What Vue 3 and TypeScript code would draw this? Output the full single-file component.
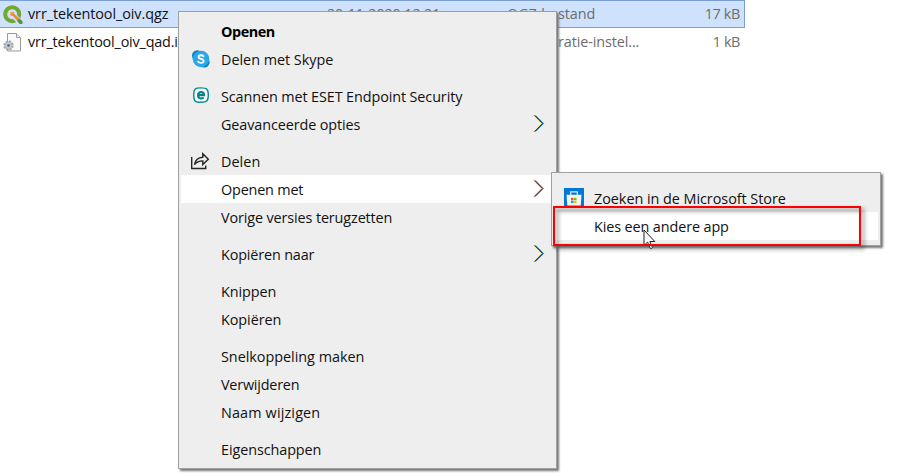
<script setup lang="ts">
interface MenuItem {
  label: string
  width: number
  icon?: 'skype' | 'eset' | 'share'
  bold?: boolean
  submenu?: boolean
  active?: boolean
}

const files = [
  { name: 'vrr_tekentool_oiv.qgz', nameW: 140, date: '20-11-2020 12:21', dateW: 113, type: 'QGZ-bestand', typeW: 88, size: '17 kB', sizeW: 35, selected: true },
  { name: 'vrr_tekentool_oiv_qad.ini', nameW: 161.5, date: '20-11-2020 12:21', dateW: 113, type: 'Configuratie-instel...', typeW: 132, size: '1 kB', sizeW: 27, selected: false },
]

const groups: MenuItem[][] = [
  [
    { label: 'Openen', width: 53.5, bold: true },
    { label: 'Delen met Skype', width: 112, icon: 'skype' },
  ],
  [
    { label: 'Scannen met ESET Endpoint Security', width: 241, icon: 'eset' },
    { label: 'Geavanceerde opties', width: 139, submenu: true },
  ],
  [
    { label: 'Delen', width: 39, icon: 'share' },
    { label: 'Openen met', width: 82, submenu: true, active: true },
    { label: 'Vorige versies terugzetten', width: 171 },
  ],
  [{ label: 'Kopiëren naar', width: 93, submenu: true }],
  [
    { label: 'Knippen', width: 55 },
    { label: 'Kopiëren', width: 60 },
  ],
  [
    { label: 'Snelkoppeling maken', width: 143 },
    { label: 'Verwijderen', width: 78 },
    { label: 'Naam wijzigen', width: 99 },
  ],
  [{ label: 'Eigenschappen', width: 100 }],
]

// Spreads the letters of a label over the given width.
const vFit = {
  mounted(el: HTMLElement, binding: { value: number }) {
    const natural = el.getBoundingClientRect().width
    const count = (el.textContent ?? '').length
    el.style.letterSpacing = `${(binding.value - natural + 0.3) / count}px`
  },
}
</script>

<template>
  <main class="desktop">
    <section class="files">
      <div v-for="(f, i) in files" :key="f.name" class="file" :class="{ selected: f.selected }">
        <svg v-if="i === 0" class="ficon" viewBox="0 0 24 24">
          <circle cx="12.2" cy="12.2" r="7" fill="none" stroke="#6fa832" stroke-width="4" />
          <path d="M12.500 12.500L22 22" stroke="#cfe2fd" stroke-width="5.500" />
          <path d="M16.800 18.800l2.400-2.600 3.300 3v2.800h-2.800z" fill="#589632" />
          <path d="M10.300 10.300h4.200l-.8 1.200 5.600 4.800-2.200 2.300-5-5.400-1.400 1z" fill="#ee8a2c" />
          <path d="M10.300 10.300h3l-2.600 2.800z" fill="#f7a93b" />
        </svg>
        <svg v-else class="ficon" viewBox="0 0 24 24">
          <path d="M7.500 3.500h9l4 4v13.500h-13z" fill="#fafafa" stroke="#9a9a9a" />
          <path d="M16.500 3.500v4h4" fill="#eee" stroke="#9a9a9a" />
          <circle cx="8.500" cy="15.500" r="4.200" fill="#b7bfc5" stroke="#9fa8ae" stroke-width="2" stroke-dasharray="2 1.300" />
          <circle cx="8.500" cy="15.500" r="3" fill="#c3cbd0" />
          <circle cx="8.500" cy="15.500" r="1.300" fill="#525e67" />
        </svg>
        <div class="name"><span v-fit="f.nameW">{{ f.name }}</span></div>
        <div class="date"><span v-fit="f.dateW">{{ f.date }}</span></div>
        <div class="type"><span v-fit="f.typeW">{{ f.type }}</span></div>
        <div class="size"><span v-fit="f.sizeW">{{ f.size }}</span></div>
      </div>
    </section>

    <nav class="menu main-menu">
      <div v-for="(g, gi) in groups" :key="gi" class="group">
        <div v-for="item in g" :key="item.label" class="item" :class="{ active: item.active, bold: item.bold }">
          <div class="icon">
            <svg v-if="item.icon === 'skype'" width="20" height="20" viewBox="0 0 20 20">
              <circle cx="7.500" cy="6.700" r="5.500" fill="#087cc1" />
              <circle cx="14.300" cy="13.200" r="5.300" fill="#087cc1" />
              <circle cx="11" cy="10" r="8.300" fill="#28a8ea" />
              <path d="M13.500 7.200C12.700 5.800 8.500 5.700 8.500 8c0 2.400 5.100 1.400 5.100 4 0 2.500-4.600 2.200-5.500.6" fill="none" stroke="#fff" stroke-width="1.900" stroke-linecap="round" />
            </svg>
            <svg v-else-if="item.icon === 'eset'" width="20" height="20" viewBox="0 0 20 20">
              <path d="M11 1.900c6 0 7.300 1.200 7.300 7.100S17 16.300 11 16.300 3.700 15 3.700 9 5 1.900 11 1.900z" fill="#f7ffff" stroke="#0a8d93" stroke-width="1.400" />
              <path d="M8 9.100h6c0-3.900-6-4.100-6 .1 0 3.600 3.500 3.800 5.700 2.500" fill="none" stroke="#0a8288" stroke-width="2.100" />
            </svg>
            <svg v-else-if="item.icon === 'share'" width="20" height="20" viewBox="0 0 20 20">
              <path d="M1.700 6v11.500h14v-3M4.500 13.700c.8-4.800 3.600-7.300 8.300-7.500V2.700l5.500 5.600-5.500 5.200v-3.600c-4 0-6.200 1-8.300 3.800z" fill="none" stroke="#252525" stroke-width="1.400" />
            </svg>
          </div>
          <span v-fit="item.width" class="label">{{ item.label }}</span>
          <svg v-if="item.submenu" class="chevron" :class="{ warm: item.active }" width="12" height="20" viewBox="0 0 12 20">
            <path class="fringe-left" d="M.8 2.400l8 8.100-8 8.100" />
            <path class="fringe-right" d="M2.600 2.400l8 8.100-8 8.100" />
            <path class="stroke" d="M1.700 2.400l8 8.100-8 8.100" />
          </svg>
        </div>
      </div>
    </nav>

    <nav class="menu sub-menu">
      <div class="item">
        <div class="icon">
          <svg width="20" height="20" viewBox="0 0 20 20">
            <path d="M0 0h20v20H0z" fill="#0078d7" />
            <path d="M6.700 7V3.800h6.600V7" fill="none" stroke="#d9edfc" stroke-width="1.200" />
            <path d="M2.500 6.800h15l-.8 10.700H3.300z" fill="#f5f7f8" />
            <path d="M7 9.800h2.500v2.400H7z" fill="#f04e23" />
            <path d="M10 9.800h2.500v2.400H10z" fill="#7fb900" />
            <path d="M7 12.700h2.500v2.400H7z" fill="#00a3ee" />
            <path d="M10 12.700h2.500v2.400H10z" fill="#ffb800" />
          </svg>
        </div>
        <span v-fit="191.500" class="label">Zoeken in de Microsoft Store</span>
      </div>
      <div class="item active">
        <div class="icon"></div>
        <span v-fit="134.500" class="label">Kies een andere app</span>
      </div>
    </nav>

    <div class="marker"></div>
    <svg class="cursor" width="14" height="21" viewBox="0 0 14 21">
      <path d="M1 1v15.500l3.600-3.400 2.500 6c.6 1.100 2.600.3 2.200-.9l-2.500-5.700h5z" fill="#fff" stroke="#1d1d2b" stroke-width="1" />
    </svg>
    <div class="marker-edge"></div>
  </main>
</template>

<style>
body {
  background: #fff;
}
</style>

<style scoped>
.desktop {
  position: relative;
  width: 898px;
  height: 476px;
  overflow: hidden;
  font: 14.4px/20px 'Open Sans', 'Noto Sans', sans-serif;
  color: #111;
  white-space: nowrap;
}
.files {
  width: 745px;
}
.file {
  display: grid;
  grid-template-columns: 26px 300px 180px 150px 83px;
  align-items: center;
  box-sizing: border-box;
  height: 28px;
  padding-left: 1px;
  border: 1px solid transparent;
  border-left: 0;
}
.file.selected {
  background: #cfe2fd;
  border-color: #7a9fd4;
}
.file + .file {
  height: 27px;
  padding-top: 1px;
}
.ficon {
  width: 24px;
  height: 24px;
  margin-left: -1px;
}
.name {
  padding-left: 1px;
}
.date,
.type,
.size {
  color: #6d6d6d;
}
.size {
  text-align: right;
}
.menu {
  position: absolute;
  box-sizing: border-box;
  background: #eee;
  border: 1px solid #a0a0a0;
  box-shadow: 2px 2px 2px #777;
}
.main-menu {
  left: 178px;
  top: 11px;
  width: 379px;
  height: 458px;
  padding: 5px 2px;
}
.sub-menu {
  left: 551px;
  top: 172px;
  width: 330px;
  height: 74px;
  padding: 11px 2px 0;
}
.group + .group {
  margin-top: 9px;
}
.item {
  display: flex;
  align-items: center;
  height: 28px;
}
.label {
  padding-top: 2px;
}
.active {
  background: #fff;
}
.bold {
  font-weight: 700;
  color: #000;
}
.icon {
  display: flex;
  width: 20px;
  height: 20px;
  margin: 0 11px 0 9px;
}
.sub-menu .icon {
  margin: 0 10px;
}
.chevron {
  margin-left: auto;
  margin-right: 9px;
  margin-top: -2px;
}
.chevron path {
  fill: none;
  stroke-width: 1;
}
.chevron .fringe-left {
  stroke: #efd56a;
}
.chevron .fringe-right {
  stroke: #1c86cf;
}
.chevron .stroke {
  stroke: #0c1218;
  stroke-width: 1;
}
.chevron.warm .fringe-left {
  stroke: #f09a50;
}
.chevron.warm .fringe-right {
  stroke: #6aa5dc;
}
.chevron.warm .stroke {
  stroke: #45100c;
}
.marker,
.marker-edge {
  position: absolute;
  left: 553px;
  top: 206px;
  width: 308px;
  height: 40px;
  box-sizing: border-box;
  border: 2px solid #f00;
}
.marker {
  filter: drop-shadow(3px 3px 2px rgba(0, 0, 0, 0.5));
}
.cursor {
  position: absolute;
  left: 643px;
  top: 229px;
}
</style>
